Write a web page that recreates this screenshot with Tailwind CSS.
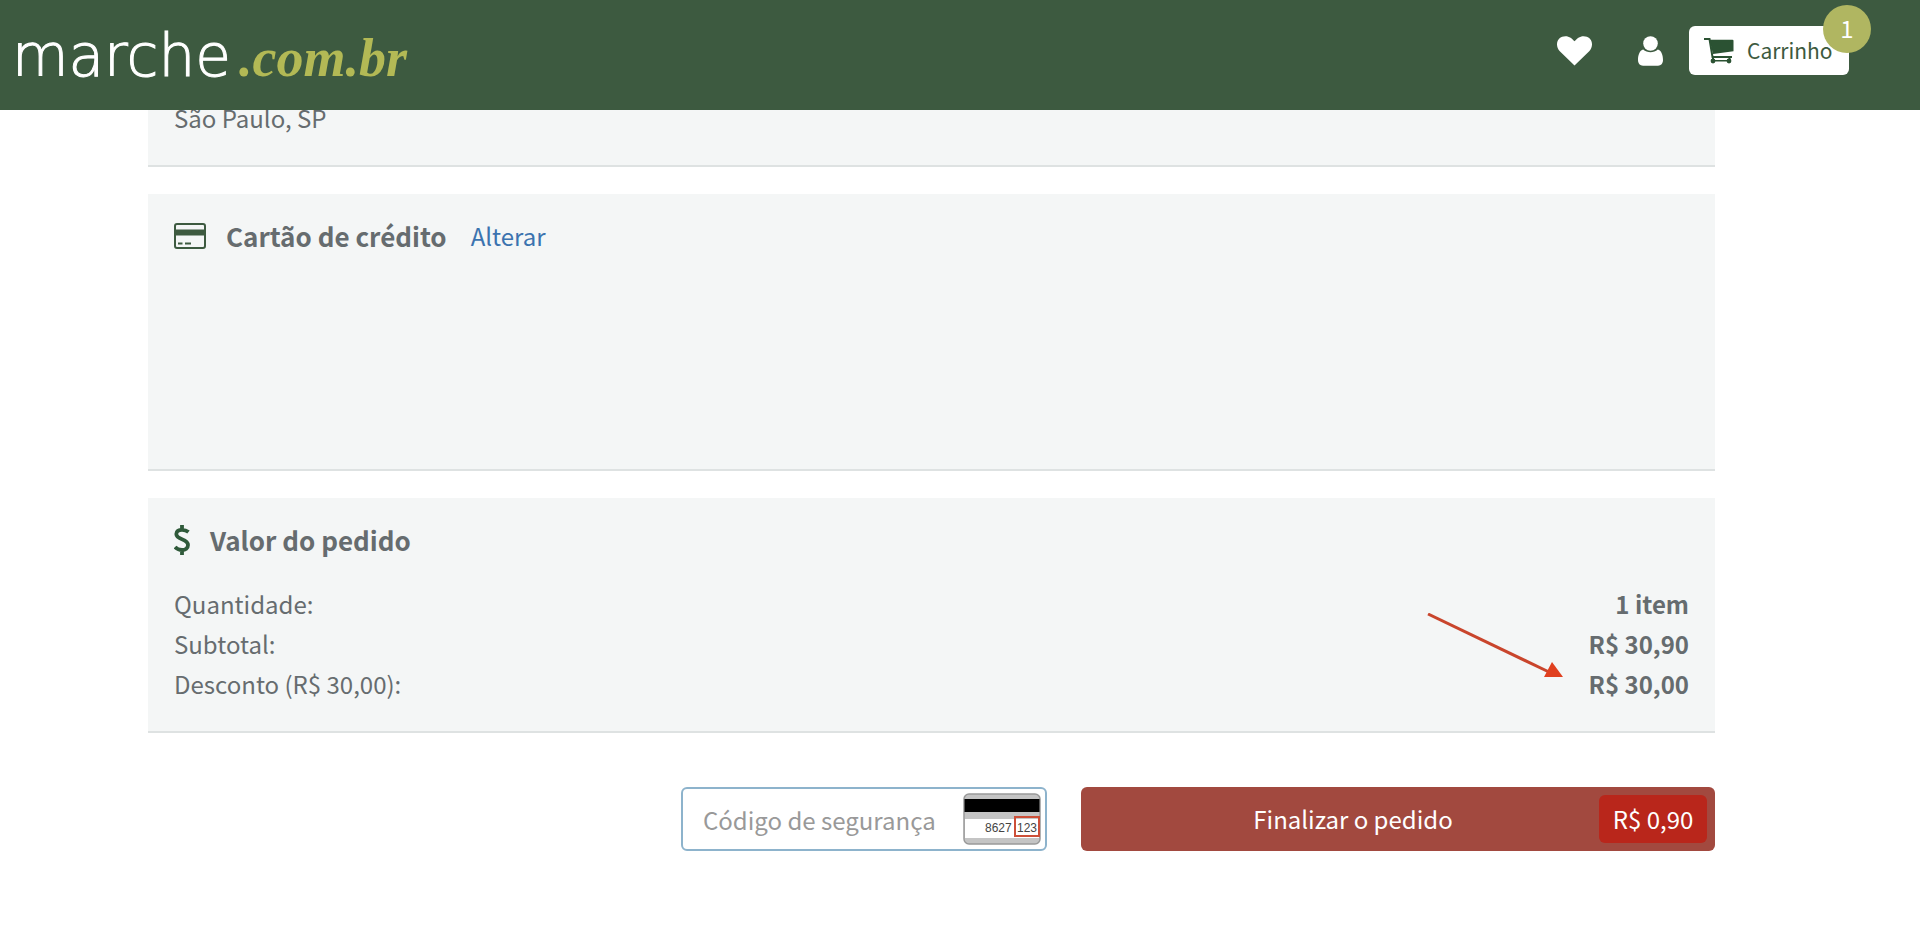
<!DOCTYPE html>
<html lang="pt-BR">
<head>
  <meta charset="UTF-8" />
  <meta name="viewport" content="width=device-width, initial-scale=1.0"/>
  <title>marche.com.br - Finalizar pedido</title>

  <!-- Tailwind CSS -->
  <script src="https://cdn.jsdelivr.net/npm/@tailwindcss/browser@4"></script>
</head>

<body class="bg-white font-['Noto_Sans_CJK_JP','Noto_Sans',sans-serif] text-[24px] leading-10 text-[#666c6f]">

  <!-- Header -->
  <header class="relative z-10 h-[110px] bg-[#3d5a40] pl-3 pr-[71px] flex items-start justify-between">
    <a href="#" class="flex items-baseline pt-5 leading-[72px]">
      <span class="font-['DejaVu_Sans',sans-serif] font-extralight text-[58px] text-white [-webkit-text-stroke:1px_white]">marche</span>
      <span class="pl-2 font-['Liberation_Serif',serif] font-bold italic text-[54px] text-[#b3b955]">.com.br</span>
    </a>

    <nav class="flex items-center pt-[26px]">
      <a href="#" aria-label="Favoritos" class="mr-[46px]">
        <svg class="w-[35px] h-[30px]" viewBox="0 0 35 30" fill="#fff">
          <path d="M17.5 29.5 2.800 15.200C-.9 11.200-.8 5.500 2.300 2.500 5.200-.3 10.500-.5 13.600 1.800 15 2.800 16.500 4.300 17.500 5.300 18.500 4.300 20 2.800 21.400 1.800 24.500-.5 29.800-.3 32.700 2.500 35.800 5.500 35.900 11.200 32.200 15.200Z"/>
        </svg>
      </a>
      <a href="#" aria-label="Minha conta" class="mr-[26px]">
        <svg class="w-[25px] h-[30px]" viewBox="0 0 25 30" fill="#fff">
          <circle cx="12.500" cy="7.500" r="7.300"/>
          <path d="M5.200 13.600C7.200 15.300 9.800 16.300 12.500 16.300S17.800 15.300 19.800 13.600C23.300 14.500 25 19 25 24 25 27.500 23 29.700 20 29.700H5C2 29.700 0 27.500 0 24 0 19 1.700 14.500 5.200 13.600Z"/>
        </svg>
      </a>
      <button type="button" class="relative h-[49px] w-40 rounded-md bg-white pl-[15px] flex items-center gap-[13px] text-[21px] text-[#3d5a40]">
        <svg class="w-[30px] h-[26px] shrink-0" viewBox="0 0 30 26" fill="#2b5233">
          <path d="M5.500 1.800H28.500Q29.500 1.800 29.500 2.800V13.200L9 16Z"/>
          <path d="M0 1H5.500L8.500 19H28" fill="none" stroke="#2b5233" stroke-width="2"/>
          <path d="M8 18H10V23H8ZM24.500 18H26.500V23H24.500Z"/>
          <path d="M9 22H25V23.500H9Z"/>
          <circle cx="9" cy="23" r="2.400"/>
          <circle cx="25" cy="23" r="2.400"/>
        </svg>
        <span class="pb-0.5">Carrinho</span>
        <span class="absolute -top-[21px] -right-[22px] size-12 rounded-full bg-[#b0b661] pb-0.5 flex items-center justify-center text-[24px] text-white">1</span>
      </button>
    </nav>
  </header>

  <main class="-mt-3 pl-[148px] pr-[205px]">
    <!-- Endereço -->
    <section class="bg-[#f4f6f6] border-b-2 border-[#dee2e2] px-[26px] pb-[27px]">
      <p>São Paulo, SP</p>
    </section>

    <!-- Cartão de crédito -->
    <section class="mt-[27px] h-[277px] bg-[#f4f6f6] border-b-2 border-[#dee2e2] px-[26px] pt-[22px]">
      <div class="flex items-center">
        <svg class="w-8 h-[26px] mr-5" viewBox="0 0 32 26" fill="none" stroke="#3d5a40" stroke-width="2">
          <rect x="1" y="1" width="30" height="24" rx="2"/>
          <path d="M1 9.500H31" stroke-width="6"/>
          <path d="M4 20.500H8.500M11 20.500H17"/>
        </svg>
        <h2 class="text-[26px] font-bold">Cartão de crédito</h2>
        <a href="#" class="ml-6 text-[#3b73af]">Alterar</a>
      </div>
    </section>

    <!-- Valor do pedido -->
    <section class="relative mt-[27px] bg-[#f4f6f6] border-b-2 border-[#dee2e2] px-[26px] pt-[22px] pb-[27px]">
      <div class="flex items-center">
        <svg class="w-4 h-[30px] mr-5" viewBox="0 0 16 30" fill="none" stroke="#2f5a3a" stroke-width="3.800">
          <path d="M14.500 7C12.500 5.400 10.500 4.800 8 4.800 4.500 4.800 2.300 6.300 2.300 9 2.300 15.200 14 13.300 14 20 14 23.300 11.500 25 8 25 5.200 25 2.800 24 1 22.100M8 0V5M8 25V30"/>
        </svg>
        <h2 class="text-[26px] font-bold">Valor do pedido</h2>
      </div>
      <dl class="mt-6">
        <div class="flex justify-between"><dt>Quantidade:</dt><dd class="font-bold">1 item</dd></div>
        <div class="flex justify-between"><dt>Subtotal:</dt><dd class="font-bold">R$ 30,90</dd></div>
        <div class="flex justify-between"><dt>Desconto (R$ 30,00):</dt><dd class="font-bold">R$ 30,00</dd></div>
      </dl>
      <svg class="absolute top-[115px] right-[152px] w-[136px] h-[68px]" viewBox="0 0 136 68">
        <path d="M1 1 122 59" stroke="#c9452c" stroke-width="3"/>
        <path d="M125 49 136 64 117 64Z" fill="#e0401f"/>
      </svg>
    </section>

    <!-- Pagamento -->
    <form class="mt-[54px] flex justify-end gap-[34px]">
      <div class="relative w-[366px]">
        <input id="cvv" type="text" aria-label="Código de segurança" placeholder="Código de segurança" class="w-full h-16 rounded-md border-2 border-[#8db3cc] bg-white pl-5 pr-[84px] placeholder:text-[#999]" />
        <svg class="absolute top-1.5 right-1.5 w-[78px] h-[52px]" viewBox="0 0 78 52" font-family="Liberation Sans, sans-serif" font-size="12" fill="#444">
          <rect x="1" y="1" width="76" height="50" rx="5" fill="#c4c4c4" stroke="#999" stroke-width="1.500"/>
          <rect x="1.500" y="6" width="75" height="13" fill="#000"/>
          <rect x="2" y="26" width="74" height="19" fill="#fff"/>
          <text x="22" y="39">8627</text>
          <text x="54" y="39">123</text>
          <rect x="52" y="24" width="24" height="19" fill="none" stroke="#cd4f38" stroke-width="2"/>
        </svg>
      </div>
      <button type="button" class="w-[634px] h-16 rounded-md bg-[#a2493f] pr-2 flex items-center text-white">
        <span class="flex-1 pl-[26px]">Finalizar o pedido</span>
        <span class="h-12 w-[108px] rounded-md bg-[#b9261b] flex items-center justify-center">R$ 0,90</span>
      </button>
    </form>
  </main>
</body>
</html>
